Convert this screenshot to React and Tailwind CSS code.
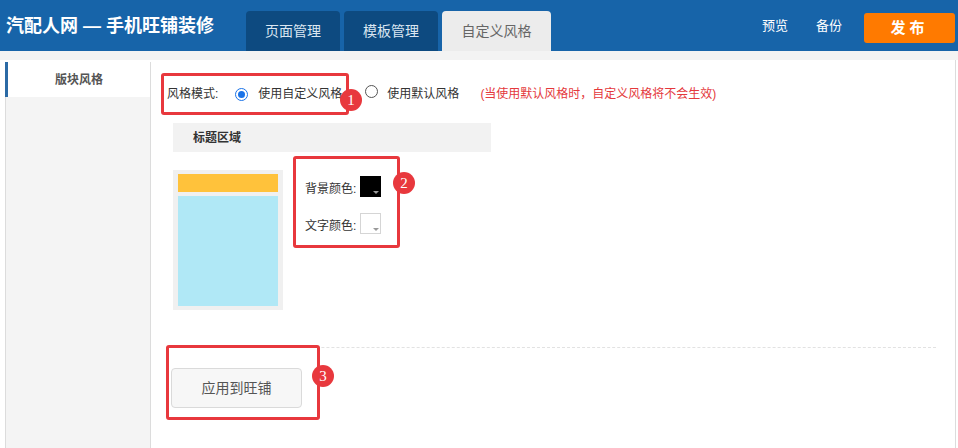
import React from 'react';

const font = { fontFamily: '"Liberation Sans", "Noto Sans CJK SC", sans-serif' };

const Badge = ({ n, className }) => (
  <div
    className={`absolute w-[22px] h-[22px] rounded-full bg-[#e8383d] text-white flex items-center justify-center text-[15px] leading-none ${className}`}
    style={{ fontFamily: '"Liberation Serif", serif' }}
  >
    {n}
  </div>
);

const Radio = ({ checked }) => (
  <span
    className={`inline-flex items-center justify-center w-[13px] h-[13px] rounded-full border ${
      checked ? 'border-[#1a73e8]' : 'border-[#555]'
    }`}
  >
    {checked && <span className="w-[7px] h-[7px] rounded-full bg-[#1a73e8]" />}
  </span>
);

const Swatch = ({ color }) => (
  <span
    className={`relative inline-block w-[21px] h-[21px] border ${
      color === 'black' ? 'bg-black border-black' : 'bg-white border-[#d5d5d5]'
    }`}
  >
    <span className="absolute right-[1px] bottom-[2px] w-0 h-0 border-l-[3px] border-r-[3px] border-t-[3px] border-l-transparent border-r-transparent border-t-[#999]" />
  </span>
);

export default function App() {
  return (
    <div className="w-[958px] h-[448px] bg-white overflow-hidden" style={font}>
      {/* Header */}
      <div className="flex h-[51px] bg-[#1764a9] pr-[3px]">
        <div className="self-center pl-[6px] w-[246px] shrink-0 text-white text-[18px] font-bold mt-[2px]">
          汽配人网 — 手机旺铺装修
        </div>
        <div className="flex items-end gap-[4px]">
          <div className="w-[94px] h-[40px] rounded-t-[4px] bg-[#0d4a80] text-[#dbe6f1] text-[14px] flex items-center justify-center">
            页面管理
          </div>
          <div className="w-[94px] h-[40px] rounded-t-[4px] bg-[#0d4a80] text-[#dbe6f1] text-[14px] flex items-center justify-center">
            模板管理
          </div>
          <div className="w-[109px] h-[40px] rounded-t-[4px] bg-[#ececec] text-[#666] text-[14px] flex items-center justify-center">
            自定义风格
          </div>
        </div>
        <div className="ml-auto flex items-center">
          <span className="text-white text-[13px] mr-[28px]">预览</span>
          <span className="text-white text-[13px] mr-[22px]">备份</span>
          <button className="w-[91px] h-[30px] rounded-[3px] bg-[#ff7a00] text-white text-[15px] font-bold tracking-[4px] mt-[5px]">
            发布
          </button>
        </div>
      </div>

      {/* Body */}
      <div className="h-[9px] bg-[#f3f3f3]" />
      <div className="flex pl-[5px] pr-[2px] h-[388px]">
        {/* Sidebar */}
        <div className="w-[146px] mt-[2px] bg-[#f4f4f4] border-l border-r border-[#dcdcdc]">
          <div className="h-[35px] bg-white border-l-[3px] border-[#2b6aa5] -ml-px flex items-center justify-center text-[12px] font-bold text-[#555]">
            版块风格
          </div>
        </div>

        {/* Main */}
        <div className="relative flex-1 bg-white border-r border-[#dcdcdc] text-[12px] text-[#333]">
          <div className="flex items-center h-[24px] mt-[22px] pl-[16px]">
            <span>风格模式:</span>
            <span className="ml-[17px]"><Radio checked /></span>
            <span className="ml-[10px]">使用自定义风格</span>
            <span className="ml-[23px]"><Radio /></span>
            <span className="ml-[9px]">使用默认风格</span>
            <span className="ml-[21px] text-[#e4393c]">(当使用默认风格时，自定义风格将不会生效)</span>
          </div>

          <div className="ml-[22px] mt-[17px] w-[318px] h-[29px] bg-[#f2f2f2] flex items-center pl-[20px] font-bold text-[#333]">
            标题区域
          </div>

          <div className="flex ml-[22px] mt-[18px]">
            <div className="w-[110px] h-[140px] bg-[#f0f0f0] p-[4px] pl-[5px] pr-[5px] flex flex-col gap-[4px]">
              <div className="h-[18px] bg-[#ffc23b]" />
              <div className="flex-1 bg-[#b0e8f6]" />
            </div>
            <div className="ml-[22px] mt-[6px] flex flex-col gap-[11px]">
              <div className="flex items-center">
                <span>背景颜色:</span>
                <span className="ml-[4px]"><Swatch color="black" /></span>
              </div>
              <div className="flex items-center">
                <span>文字颜色:</span>
                <span className="ml-[4px]"><Swatch color="white" /></span>
              </div>
            </div>
          </div>

          <div className="ml-[15px] mr-[19px] mt-[37px] border-t border-dashed border-[#e2e2e2]" />

          <button className="ml-[20px] mt-[20px] w-[131px] h-[40px] rounded-[4px] bg-[#f7f7f7] border border-[#dadada] text-[14px] text-[#555]">
            应用到旺铺
          </button>

          {/* Annotations */}
          <div className="absolute left-[10px] top-[13px] w-[188px] h-[42px] border-[3px] border-[#e8383d] rounded-[3px]" />
          <Badge n="1" className="left-[189px] top-[29px]" />
          <div className="absolute left-[142px] top-[96px] w-[107px] h-[92px] border-[3px] border-[#e8383d] rounded-[3px]" />
          <Badge n="2" className="left-[242px] top-[112px]" />
          <div className="absolute left-[15px] top-[285px] w-[154px] h-[75px] border-[3px] border-[#e8383d] rounded-[3px]" />
          <Badge n="3" className="left-[161px] top-[305px]" />
        </div>
      </div>
    </div>
  );
}
